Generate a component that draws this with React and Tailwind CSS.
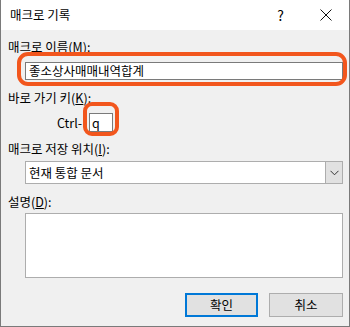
import React from 'react';

const font = { fontFamily: '"Noto Sans CJK KR", "Liberation Sans", sans-serif' };

export default function App() {
  return (
    <div
      className="w-[350px] h-[327px] bg-[#f0f0f0] border-l border-r border-b border-[#7a7a7a] text-[12.5px] text-black overflow-hidden"
      style={font}
    >
      {/* title bar */}
      <div className="h-[30px] bg-white flex items-center pl-[9px] pr-[17px]">
        <span className="text-[12.5px] leading-[16px] flex-1">매크로 기록</span>
        <span className="text-[14px] leading-[16px] mr-[36px]">?</span>
        <svg width="12" height="12" viewBox="0 0 12 12" className="block">
          <path d="M0.5 0.5 L11.5 11.5 M11.5 0.5 L0.5 11.5" stroke="#111" strokeWidth="1" />
        </svg>
      </div>

      <div className="pl-[7px] pr-[6px]">
        <div className="mt-[9px] leading-[16px]">
          매크로 이름(<span className="underline">M</span>):
        </div>
        <div className="relative mt-[7px] ml-[17px] h-[18px]">
          <div className="h-full bg-white border border-[#7a7a7a] flex items-center pl-[3px] leading-[16px]">
            좋소상사매매내역합계
          </div>
          <span className="pointer-events-none absolute left-[-8px] right-[-4px] top-[-10px] bottom-[-6px] border-[4px] border-[#f2561d] rounded-[11px]" />
        </div>

        <div className="mt-[10px] leading-[16px]">
          바로 가기 키(<span className="underline">K</span>):
        </div>
        <div className="mt-[7px] flex items-center">
          <span className="ml-[49px] w-[32px] leading-[16px]">Ctrl-</span>
          <div className="relative">
            <div className="w-[24px] h-[19px] bg-white border border-[#7a7a7a] flex items-center pl-[2px] leading-[16px]">
              q
            </div>
            <span className="pointer-events-none absolute left-[-6px] right-[-6px] top-[-11px] bottom-[-4px] border-[4px] border-[#f2561d] rounded-[9px]" />
          </div>
        </div>

        <div className="mt-[9px] leading-[16px]">
          매크로 저장 위치(<span className="underline">I</span>):
        </div>
        <div className="mt-[4px] ml-[17px] h-[23px] bg-white border border-[#adadad] flex">
          <div className="flex-1 flex items-center pl-[3px] leading-[16px]">현재 통합 문서</div>
          <div className="w-[17px] bg-[#e1e1e1] border-l border-[#adadad] flex items-center justify-center">
            <svg width="9" height="6" viewBox="0 0 9 6">
              <path d="M0.5 0.8 L4.5 4.8 L8.5 0.8" fill="none" stroke="#333" strokeWidth="1" />
            </svg>
          </div>
        </div>

        <div className="mt-[10px] leading-[16px]">
          설명(<span className="underline">D</span>):
        </div>
        <div className="mt-[3px] ml-[17px] h-[65px] bg-white border border-[#adadad]" />

        <div className="mt-[15px] flex justify-end gap-[11px]">
          <button className="w-[73px] h-[24px] bg-[#e1e1e1] border-2 border-[#0078d7] leading-[16px]">
            확인
          </button>
          <button className="w-[74px] h-[24px] bg-[#e1e1e1] border border-[#adadad] leading-[16px]">
            취소
          </button>
        </div>
      </div>
    </div>
  );
}
